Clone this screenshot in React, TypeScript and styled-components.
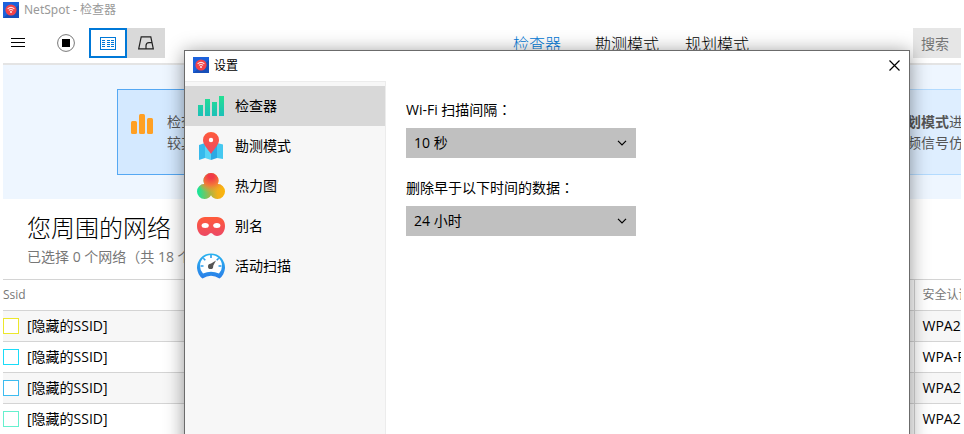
import React from 'react';
import styled, { createGlobalStyle } from 'styled-components';

const GlobalStyle = createGlobalStyle`
  * { box-sizing: border-box; }
  body {
    margin: 0;
    background: #fff;
    color: #000;
    font: 14px/20px 'Open Sans', 'Noto Sans CJK SC', sans-serif;
  }
  button, input, select { font: inherit; color: inherit; border: 0; padding: 0; border-radius: 0; }
  h1, h2, p { margin: 0; font-weight: 400; }
  svg { display: block; flex: none; }
`;

const Desktop = styled.div`
  position: relative;
  height: 100vh;
  overflow: hidden;
  padding: 0 3px;
`;
const MainWindow = styled.main`
  overflow: hidden;
`;
const TitleBar = styled.header`
  display: flex;
  align-items: center;
  gap: 5px;
  height: 20px;
  font-family: 'Noto Sans', 'Noto Sans CJK SC', sans-serif;
  font-size: 12px;
  color: #999;
`;
const Toolbar = styled.div`
  display: flex;
  align-items: center;
  height: 45px;
  padding-top: 3px;
  border-bottom: 2px solid #e4e4e4;
`;
const IconButton = styled.button`
  display: grid;
  place-items: center;
  width: 30px;
  height: 30px;
  background: none;
`;
const RecordButton = styled(IconButton)`
  margin: 0 8px 0 18px;
`;
const ViewButton = styled(IconButton)<{ $active?: boolean }>`
  width: 38px;
  background: ${p => (p.$active ? '#fff' : '#d9d9d9')};
  border: 2px solid ${p => (p.$active ? '#0078d7' : '#d9d9d9')};
`;
const ModeNav = styled.nav`
  display: flex;
  gap: 26px;
  margin-left: auto;
  padding-top: 2px;
`;
const ModeLink = styled.a<{ $active?: boolean }>`
  min-width: 56px;
  font-size: 16px;
  font-weight: 300;
  text-decoration: none;
  color: ${p => (p.$active ? '#0078d7' : '#000')};
`;
const SearchBox = styled.input`
  width: 48px;
  height: 30px;
  margin-left: 164px;
  padding-left: 8px;
  background: #e6e6e6;
  outline: 0;
  &::placeholder { color: #757575; opacity: 1; }
`;
const Banner = styled.section`
  display: flex;
  justify-content: space-between;
  padding: 24px 0 24px 114px;
  background: #eef6ff;
`;
const ModeCard = styled.article<{ $active?: boolean }>`
  display: flex;
  flex: 0 0 ${p => (p.$active ? '340px' : '118px')};
  gap: 13px;
  height: 86px;
  padding: 21px 0 0 13px;
  overflow: hidden;
  white-space: nowrap;
  color: #555;
  background: ${p => (p.$active ? '#d4e9ff' : '#deeeff')};
  border: 1px solid ${p => (p.$active ? '#55a8f3' : '#b3dbff')};
  border-right-width: ${p => (p.$active ? '1px' : '0')};
  p { line-height: 21px; }
`;
const Summary = styled.section`
  padding: 16px 24px 12px;
`;
const Heading = styled.h1`
  && { font-weight: 300; }
  font-size: 24px;
  line-height: 26px;
  padding-bottom: 6px;
`;
const Muted = styled.p`
  color: #777;
`;
const NetworkTable = styled.table`
  width: 100%;
  table-layout: fixed;
  border-collapse: collapse;
  th, td {
    height: 31px;
    padding: 0;
    border-top: 1px solid #d4d4d4;
    text-align: left;
    white-space: nowrap;
    overflow: hidden;
  }
  th {
    font-size: 12px;
    font-weight: 400;
    color: #777;
  }
  th:last-child, td:last-child {
    width: 47px;
    padding-left: 8px;
    border-left: 1px solid #d4d4d4;
  }
  tbody tr:nth-child(odd) { background: #f7f7f7; }
`;
const NetworkToggle = styled.label`
  display: flex;
  align-items: center;
  gap: 8px;
`;
const Tick = styled.input<{ $color: string }>`
  appearance: none;
  width: 16px;
  height: 16px;
  margin: 0;
  background: #fff;
  border: 1px solid ${p => p.$color};
`;
const Dialog = styled.section`
  position: absolute;
  top: 50px;
  bottom: -60px;
  left: 184px;
  right: 54px;
  display: flex;
  flex-direction: column;
  background: #fff;
  border: 1px solid #6b6b6b;
  box-shadow: 0 2px 18px rgba(0, 0, 0, 0.42);
`;
const DialogBar = styled.header`
  display: flex;
  align-items: center;
  gap: 5px;
  height: 30px;
  padding: 0 0 2px 8px;
  h2 { font-size: 12px; padding-top: 2px; }
  button { margin-left: auto; }
`;
const DialogBody = styled.div`
  display: flex;
  flex: 1;
`;
const Sidebar = styled.nav`
  display: flex;
  flex-direction: column;
  flex: 0 0 201px;
  padding-top: 4px;
  background: #f7f7f7;
  border: solid #ececec;
  border-width: 1px 1px 0 0;
`;
const SideItem = styled.button<{ $active?: boolean }>`
  display: flex;
  align-items: center;
  gap: 10px;
  height: 40px;
  padding-left: 12px;
  background: ${p => (p.$active ? '#d8d8d8' : 'none')};
`;
const Form = styled.form`
  display: flex;
  flex-direction: column;
  gap: 20px;
  flex: 1;
  padding: 19px 20px;
`;
const Field = styled.div`
  display: grid;
  grid-template-columns: 230px;
  gap: 8px;
`;
const Colon = styled.span`
  font-family: 'Noto Sans CJK TC', sans-serif;
  line-height: 1;
`;
const SelectFrame = styled.div`
  display: grid;
  align-items: center;
  height: 30px;
  background: #c0c0c0;
  > * { grid-area: 1 / 1; }
  svg { justify-self: end; margin-right: 9px; pointer-events: none; }
`;
const Select = styled.select`
  appearance: none;
  height: 30px;
  padding-left: 8px;
  background: transparent;
`;

const AppIcon = () => (
  <svg width="16" height="16" viewBox="0 0 16 16">
    <path d="M0 0h16v16H0z" fill="#1c62dc" />
    <path d="M0 16 16 3v13z" fill="#174fb9" />
    <circle cx="8" cy="8" r="5.6" fill="#f3434a" />
    <path d="M4.6 6.8q3.4-2.8 6.8 0M5.9 8.4q2.1-1.7 4.2 0" fill="none" stroke="#fff" strokeOpacity=".85" strokeWidth="1.1" />
    <circle cx="8" cy="10" r=".9" fill="#fff" />
  </svg>
);
const MenuIcon = () => (
  <svg width="14" height="10" viewBox="0 0 14 10" shapeRendering="crispEdges">
    <path d="M0 .5h14M0 4.5h14M0 8.5h14" stroke="#000" />
  </svg>
);
const StopIcon = () => (
  <svg width="18" height="18" viewBox="0 0 18 18">
    <circle cx="9" cy="9" r="8.4" fill="none" stroke="#777" />
    <path d="M5 5h8v8H5z" />
  </svg>
);
const ListIcon = () => (
  <svg width="16" height="13" viewBox="0 0 16 13" shapeRendering="crispEdges">
    <path d="M.5.5h15v12H.5z" fill="none" stroke="#0078d7" />
    <path d="M2 3.5h12M2 5.5h12M2 7.5h12M2 9.5h12" stroke="#0078d7" strokeDasharray="3 1.5" />
  </svg>
);
const PlanIcon = () => (
  <svg width="16" height="14" viewBox="0 0 16 14" fill="none" stroke="#222" strokeWidth="1.2">
    <path d="M3.2.8h9.600l2.500 12.100H.7zM8 12.900v-3.200q0-3 3-3h3.200" />
  </svg>
);
const CloseIcon = () => (
  <svg width="11" height="11" viewBox="0 0 11 11">
    <path d="m.5.5 10 10m0-10-10 10" stroke="#000" strokeWidth="1.2" />
  </svg>
);
const ChevronIcon = () => (
  <svg width="10" height="6" viewBox="0 0 10 6">
    <path d="m1 .8 4 4 4-4" fill="none" stroke="#000" strokeWidth="1.2" />
  </svg>
);
const CardBars = () => (
  <svg width="23" height="26" viewBox="0 0 23 26" fill="#ffa024">
    <rect y="10" width="6" height="13" rx="1.5" />
    <rect x="8" y="3" width="6" height="20" rx="1.5" />
    <rect x="16" y="7" width="6" height="16" rx="1.5" />
  </svg>
);
const BarsIcon = () => (
  <svg width="28" height="28" viewBox="0 0 28 28">
    <defs>
      <linearGradient id="green" x2="0" y2="28" gradientUnits="userSpaceOnUse">
        <stop offset=".15" stopColor="#23e092" />
        <stop offset=".85" stopColor="#1cc0b8" />
      </linearGradient>
    </defs>
    <path d="M1 13h5v11H1zM8 7h5v17H8zM15 10h5v14h-5zM22 4h5v20h-5z" fill="url(#green)" />
  </svg>
);
const MapIcon = () => (
  <svg width="28" height="28" viewBox="0 0 28 28">
    <defs>
      <linearGradient id="pin" x2="0" y2="1">
        <stop stopColor="#ff5b3a" />
        <stop offset="1" stopColor="#ec4865" />
      </linearGradient>
    </defs>
    <path d="m2 13 6-2v15l-6 2z" fill="#36b9ec" />
    <path d="m8 11 6 2v15l-6-2z" fill="#58d3f5" />
    <path d="m14 13 6-2v15l-6 2z" fill="#2ba9e4" />
    <path d="m20 11 6 1.5V27l-6-1z" fill="#45c8f0" />
    <path d="M14 22C10 16 6 12.500 6 8a8 8 0 0 1 16 0c0 4.500-4 8-8 14z" fill="url(#pin)" />
    <circle cx="14" cy="8" r="2.200" fill="#fff" />
  </svg>
);
const HeatIcon = () => (
  <svg width="28" height="28" viewBox="0 0 28 28">
    <defs>
      <radialGradient id="heatRed" cx="14" cy="4" r="17" gradientUnits="userSpaceOnUse">
        <stop offset=".15" stopColor="#f13b48" />
        <stop offset=".55" stopColor="#f47838" />
        <stop offset="1" stopColor="#e9a928" stopOpacity="0" />
      </radialGradient>
      <linearGradient id="heatBase" x1="1" x2="27" y1="22" y2="20" gradientUnits="userSpaceOnUse">
        <stop stopColor="#16e59a" />
        <stop offset=".45" stopColor="#a4b548" />
        <stop offset=".75" stopColor="#f2b01b" />
        <stop offset="1" stopColor="#fbb40c" />
      </linearGradient>
      <clipPath id="heatShape">
        <circle cx="14" cy="8.500" r="7.500" />
        <circle cx="7.500" cy="19.500" r="7.500" />
        <circle cx="20.500" cy="19.500" r="7.500" />
        <path d="M8 12h12v8H8z" />
      </clipPath>
    </defs>
    <g clipPath="url(#heatShape)">
      <path d="M0 0h28v28H0z" fill="url(#heatBase)" />
      <path d="M0 0h28v28H0z" fill="url(#heatRed)" />
    </g>
  </svg>
);
const MaskIcon = () => (
  <svg width="28" height="28" viewBox="0 0 28 28">
    <path d="M8 5h12c4.800 0 8 3.600 8 9 0 6-3.500 10-8 10-3.600 0-4-3-6-3s-2.400 3-6 3c-4.500 0-8-4-8-10 0-5.400 3.200-9 8-9z" fill="url(#pin)" />
    <ellipse cx="8.200" cy="13.500" rx="3.600" ry="2.500" fill="#fff" />
    <ellipse cx="19.800" cy="13.500" rx="3.600" ry="2.500" fill="#fff" />
  </svg>
);
const GaugeIcon = () => (
  <svg width="28" height="28" viewBox="0 0 28 28">
    <defs>
      <linearGradient id="blue" x2="0" y2="1">
        <stop stopColor="#28b4f0" />
        <stop offset="1" stopColor="#2b7fe8" />
      </linearGradient>
    </defs>
    <path d="M5.500 26.500A14 14 0 1 1 22.500 26.500q-8.500-5.500-17 0z" fill="url(#blue)" />
    <path d="M6 21.500A11 11 0 1 1 22 21.500q-8-3.500-16 0z" fill="#fff" />
    <path d="M14 3v3M6.300 6.300l2 2M21.700 6.300l-2 2M3.500 14h3M24.500 14h-3" stroke="#2a9dec" strokeWidth="1.600" />
    <path d="m12.500 12.500 6.500-4-3.500 6.500z" fill="#555" />
    <circle cx="13.600" cy="14.400" r="2.600" fill="#555" />
  </svg>
);

const networks = [
  { color: '#ece72b', security: 'WPA2' },
  { color: '#1bdcf8', security: 'WPA-P' },
  { color: '#3dbcf0', security: 'WPA2' },
  { color: '#66f0ce', security: 'WPA2' },
];
const sections = [
  { label: '检查器', Icon: BarsIcon },
  { label: '勘测模式', Icon: MapIcon },
  { label: '热力图', Icon: HeatIcon },
  { label: '别名', Icon: MaskIcon },
  { label: '活动扫描', Icon: GaugeIcon },
];
const fields = [
  { id: 'interval', label: 'Wi-Fi 扫描间隔', value: '10 秒' },
  { id: 'retention', label: '删除早于以下时间的数据', value: '24 小时' },
];

export default function App() {
  return (
    <Desktop>
      <GlobalStyle />
      <MainWindow>
        <TitleBar><AppIcon />NetSpot - 检查器</TitleBar>
        <Toolbar>
          <IconButton aria-label="菜单"><MenuIcon /></IconButton>
          <RecordButton aria-label="停止"><StopIcon /></RecordButton>
          <ViewButton $active aria-label="列表"><ListIcon /></ViewButton>
          <ViewButton aria-label="平面图"><PlanIcon /></ViewButton>
          <ModeNav>
            <ModeLink href="#inspector" $active>检查器</ModeLink>
            <ModeLink href="#survey">勘测模式</ModeLink>
            <ModeLink href="#planning">规划模式</ModeLink>
          </ModeNav>
          <SearchBox type="text" placeholder="搜索" aria-label="搜索" />
        </Toolbar>
        <Banner>
          <ModeCard $active>
            <CardBars />
            <p>检查器<br />较其</p>
          </ModeCard>
          <ModeCard>
            <CardBars />
            <p><b>规划模式</b>进<br />射频信号仿</p>
          </ModeCard>
        </Banner>
        <Summary>
          <Heading>您周围的网络</Heading>
          <Muted>已选择 0 个网络（共 18 个）</Muted>
        </Summary>
        <NetworkTable>
          <thead>
            <tr><th>Ssid</th><th>安全认证</th></tr>
          </thead>
          <tbody>
            {networks.map(n => (
              <tr key={n.color}>
                <td>
                  <NetworkToggle>
                    <Tick type="checkbox" $color={n.color} />
                    [隐藏的SSID]
                  </NetworkToggle>
                </td>
                <td>{n.security}</td>
              </tr>
            ))}
          </tbody>
        </NetworkTable>
      </MainWindow>
      <Dialog role="dialog" aria-labelledby="settings-title">
        <DialogBar>
          <AppIcon />
          <h2 id="settings-title">设置</h2>
          <IconButton aria-label="关闭"><CloseIcon /></IconButton>
        </DialogBar>
        <DialogBody>
          <Sidebar>
            {sections.map(({ label, Icon }, i) => (
              <SideItem key={label} $active={i === 0}><Icon />{label}</SideItem>
            ))}
          </Sidebar>
          <Form>
            {fields.map(f => (
              <Field key={f.id}>
                <label htmlFor={f.id}>{f.label}<Colon>：</Colon></label>
                <SelectFrame>
                  <Select id={f.id}><option>{f.value}</option></Select>
                  <ChevronIcon />
                </SelectFrame>
              </Field>
            ))}
          </Form>
        </DialogBody>
      </Dialog>
    </Desktop>
  );
}
